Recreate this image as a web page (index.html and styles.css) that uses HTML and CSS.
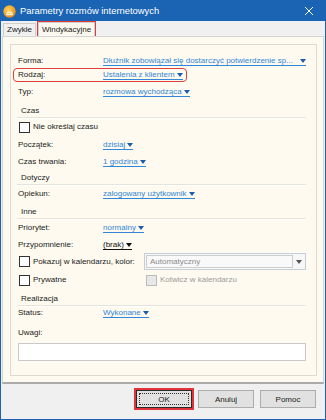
FILE: index.html
```html
<!DOCTYPE html>
<html lang="pl">
<head>
<meta charset="utf-8">
<title>Parametry rozmów internetowych</title>
<link rel="stylesheet" href="styles.css">
</head>
<body>
<div class="window">
  <div class="titlebar">
    <svg class="appicon" width="13" height="13" viewBox="0 0 13 13">
      <defs>
        <radialGradient id="g" cx="0.4" cy="0.35" r="0.7">
          <stop offset="0" stop-color="#ffd25a"/>
          <stop offset="1" stop-color="#e8860f"/>
        </radialGradient>
      </defs>
      <circle cx="6.5" cy="6.5" r="6.2" fill="url(#g)"/>
      <path d="M2.5 8.5 Q6.5 4 10.5 8.5 Q6.5 7.2 2.5 8.5Z" fill="#fff7e0"/>
      <rect x="3" y="8.6" width="7" height="1.6" rx="0.8" fill="#fff7e0"/>
    </svg>
    <span class="title">Parametry rozmów internetowych</span>
    <svg class="close" width="10" height="10" viewBox="0 0 10 10">
      <path d="M1 1 L9 9 M9 1 L1 9" stroke="#fff" stroke-width="1"/>
    </svg>
  </div>
  <div class="tabs">
    <div class="tab">Zwykłe</div>
    <div class="tab active">Windykacyjne</div>
  </div>
  <div class="page">
    <div class="frame">
      <div class="row r-forma">
        <span class="label">Forma:</span>
        <span class="link wide"><span class="txt">Dłużnik zobowiązał się dostarczyć potwierdzenie sp...</span><i class="tri"></i></span>
      </div>
      <div class="row r-rodzaj marked">
        <span class="label">Rodzaj:</span>
        <span class="link">Ustalenia z klientem<i class="tri"></i></span>
      </div>
      <div class="row mt3">
        <span class="label">Typ:</span>
        <span class="link">rozmowa wychodząca<i class="tri"></i></span>
      </div>

      <div class="section mt6">Czas</div>
      <div class="row mt2">
        <span class="check"></span><span class="checktext">Nie określaj czasu</span>
      </div>
      <div class="row mt4">
        <span class="label">Początek:</span>
        <span class="link">dzisiaj<i class="tri"></i></span>
      </div>
      <div class="row mt3">
        <span class="label">Czas trwania:</span>
        <span class="link">1 godzina<i class="tri"></i></span>
      </div>

      <div class="section mt3">Dotyczy</div>
      <div class="row mt2">
        <span class="label">Opiekun:</span>
        <span class="link">zalogowany użytkownik<i class="tri"></i></span>
      </div>

      <div class="section mt5">Inne</div>
      <div class="row mt2">
        <span class="label">Priorytet:</span>
        <span class="link">normalny<i class="tri"></i></span>
      </div>
      <div class="row mt3">
        <span class="label">Przypomnienie:</span>
        <span class="link dark">(brak)<i class="tri"></i></span>
      </div>
      <div class="row tall mt1">
        <span class="check"></span><span class="checktext colorlabel">Pokazuj w kalendarzu, kolor:</span>
        <div class="combo">
          <span class="combotext">Automatyczny</span>
          <span class="combobtn"><i class="tri grey"></i></span>
        </div>
      </div>
      <div class="row mt3">
        <span class="check"></span><span class="checktext half">Prywatne</span>
        <span class="check disabled"></span><span class="checktext muted">Kotwicz w kalendarzu</span>
      </div>

      <div class="section mt6">Realizacja</div>
      <div class="row">
        <span class="label">Status:</span>
        <span class="link">Wykonane<i class="tri"></i></span>
      </div>
      <div class="row mt6">
        <span class="label">Uwagi:</span>
      </div>
      <div class="notes mt3"></div>
    </div>
  </div>
  <div class="footer">
    <button class="btn ok"><span class="focus">OK</span></button>
    <button class="btn">Anuluj</button>
    <button class="btn">Pomoc</button>
  </div>
</div>
</body>
</html>
```
FILE: styles.css
```css
* { box-sizing: border-box; }
html, body { margin: 0; padding: 0; }
body {
  width: 326px;
  height: 420px;
  font-family: "Liberation Sans", Arial, sans-serif;
  font-size: 8px;
  color: #1a1a1a;
  background: #f0f0f0;
}
.window {
  width: 326px;
  height: 420px;
  display: flex;
  flex-direction: column;
  background: #f0f0f0;
  border: 1px solid #1b62b0;
  border-top: 0;
}
.titlebar {
  height: 21px;
  flex: none;
  background: #1b64b3;
  display: flex;
  align-items: center;
  padding: 0 0 0 3px;
  margin: 0 -1px;
}
.appicon { flex: none; margin-top: 1px; }
.title {
  color: #fff;
  font-size: 9.4px;
  margin-left: 4px;
  flex: 1;
}
.close { margin-right: 12px; }

.tabs {
  height: 15px;
  flex: none;
  display: flex;
  align-items: flex-end;
  padding-left: 2px;
  gap: 2px;
}
.tab {
  height: 13px;
  line-height: 12px;
  padding: 0 3px;
  border: 1px solid #cfcfcf;
  border-bottom: 0;
  background: #f0f0f0;
  color: #1a1a1a;
  font-size: 8px;
}
.tab.active {
  height: 14px;
  line-height: 13px;
  background: #fbf8f0;
  outline: 1.5px solid #e23a3a;
  outline-offset: 0;
  padding: 0 3px;
}

.page {
  flex: none;
  height: 348px;
  margin: 0 1px;
  background: #fefaef;
  border: 1px solid #d4d4d4;
  border-bottom: 2px solid #ababab;
  padding: 7px 6px 6px 7px;
}
.frame {
  height: 100%;
  border: 1px solid #dcdad2;
  padding: 9px 10px 0 7px;
  display: flex;
  flex-direction: column;
}
.row {
  height: 14px;
  line-height: 14px;
  display: flex;
  align-items: center;
  flex: none;
}
.row.tall { height: 17px; }
.label {
  width: 85px;
  flex: none;
}
.marked {
  width: max-content;
  outline: 1.5px solid #e0403c;
  outline-offset: 0;
  border-radius: 3px;
  margin-left: -4px;
  padding: 0 3px 0 4px;
  height: 12px;
  margin-top: 1px;
  margin-bottom: 1px;
}
.link {
  display: inline-flex;
  align-items: center;
  gap: 1px;
  color: #3286d8;
  line-height: 9px;
  border-bottom: 1px solid #3286d8;
  white-space: nowrap;
}
.link.wide {
  flex: 1;
  min-width: 0;
}
.link.wide .txt { flex: 1; overflow: hidden; }
.link.dark { color: #111; border-bottom-color: #111; }
.tri {
  display: inline-block;
  width: 0;
  height: 0;
  border-left: 3.5px solid transparent;
  border-right: 3.5px solid transparent;
  border-top: 4px solid #1c5cac;
  margin-left: 1px;
}
.link.dark .tri { border-top-color: #111; }
.tri.grey { border-top-color: #555; margin: 0; }

.section {
  height: 13px;
  line-height: 12px;
  margin-left: -1px;
  padding-left: 4px;
  border-bottom: 1px solid #e6e3da;
  box-shadow: 0 1px 0 #ffffff;
  flex: none;
}
.mt1 { margin-top: 1px; }
.mt2 { margin-top: 2px; }
.mt3 { margin-top: 3px; }
.mt4 { margin-top: 4px; }
.mt5 { margin-top: 5px; }
.mt6 { margin-top: 6px; }

.check {
  width: 11px;
  height: 11px;
  flex: none;
  border: 1px solid #333;
  background: #fff;
  margin-left: 1px;
}
.check.disabled {
  border-color: #bcbcbc;
  background: #e8e8e8;
}
.checktext { margin-left: 3px; }
.checktext.colorlabel { width: 111px; }
.checktext.half { width: 112px; }
.checktext.muted { color: #9a9a9a; }

.combo {
  flex: 1;
  height: 17px;
  border: 1px solid #c5cdd6;
  background: #f7f7f7;
  display: flex;
  align-items: stretch;
  padding: 1px 0 1px 1px;
}
.combotext {
  flex: 1;
  border: 1px solid #cdcdcd;
  background: #f9f9f9;
  color: #8a8a8a;
  line-height: 12px;
  padding-left: 3px;
}
.combobtn {
  width: 12px;
  display: flex;
  align-items: center;
  justify-content: center;
}

.notes {
  height: 18px;
  border: 1px solid #c9c9c9;
  background: #fff;
  flex: none;
}

.footer {
  flex: 1;
  display: flex;
  justify-content: flex-end;
  align-items: flex-start;
  gap: 6px;
  padding: 6px 9px 0 0;
}
.btn {
  width: 56px;
  height: 18px;
  font-family: "Liberation Sans", Arial, sans-serif;
  font-size: 8px;
  color: #1a1a1a;
  background: #e1e1e1;
  border: 1px solid #adadad;
  padding: 0;
  display: flex;
  align-items: center;
  justify-content: center;
}
.btn.ok {
  outline: 2px solid #e0343a;
  outline-offset: 0;
  border-color: #2a2a2a;
  padding: 2px;
}
.focus {
  width: 100%;
  height: 100%;
  border: 1px dotted #333;
  display: flex;
  align-items: center;
  justify-content: center;
}
```
